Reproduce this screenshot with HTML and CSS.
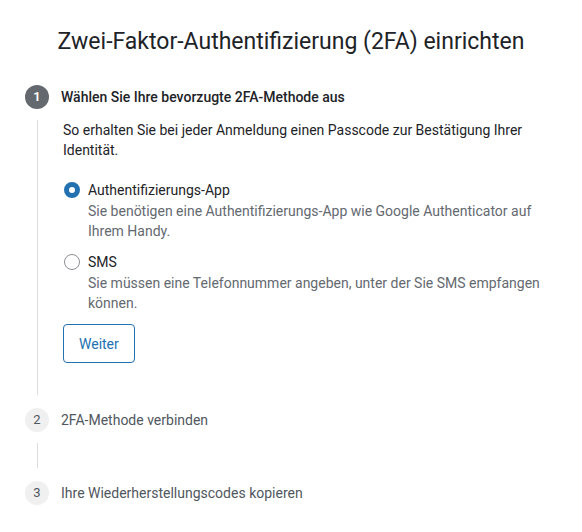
FILE: index.html
```html
<!DOCTYPE html>
<html lang="de">
<head>
  <meta charset="UTF-8">
  <title>Zwei-Faktor-Authentifizierung einrichten</title>
  <link rel="stylesheet" href="styles.css">
</head>
<body>
<div class="wrap">
  <h1 class="title">Zwei-Faktor-Authentifizierung (2FA) einrichten</h1>

  <div class="steps">
    <div class="step active">
      <div class="step-head">
        <span class="num">1</span>
        <span class="step-label">Wählen Sie Ihre bevorzugte 2FA-Methode aus</span>
      </div>
      <div class="step-body">
        <p class="intro">So erhalten Sie bei jeder Anmeldung einen Passcode zur Bestätigung Ihrer Identität.</p>

        <label class="option">
          <input type="radio" name="method" value="app" checked>
          <span class="option-text">
            <span class="option-title">Authentifizierungs-App</span>
            <span class="option-desc">Sie benötigen eine Authentifizierungs-App wie Google Authenticator auf Ihrem Handy.</span>
          </span>
        </label>

        <label class="option">
          <input type="radio" name="method" value="sms">
          <span class="option-text">
            <span class="option-title">SMS</span>
            <span class="option-desc">Sie müssen eine Telefonnummer angeben, unter der Sie SMS empfangen können.</span>
          </span>
        </label>

        <button type="button" class="btn">Weiter</button>
      </div>
    </div>

    <div class="step">
      <div class="step-head">
        <span class="num">2</span>
        <span class="step-label">2FA-Methode verbinden</span>
      </div>
      <div class="step-body"></div>
    </div>

    <div class="step last">
      <div class="step-head">
        <span class="num">3</span>
        <span class="step-label">Ihre Wiederherstellungscodes kopieren</span>
      </div>
    </div>
  </div>
</div>
</body>
</html>
```

FILE: styles.css
```css
body {
  margin: 0;
  background: #fff;
  color: #1d2327;
  font-family: Roboto, "Noto Sans", sans-serif;
  font-size: 14px;
  line-height: 20px;
}
.wrap {
  padding: 24px 25px 0;
}
.title {
  margin: 0 0 25px;
  font-size: 23px;
  line-height: 36px;
  font-weight: 400;
  text-align: center;
  color: #1d2327;
}
.step-head {
  display: flex;
  align-items: center;
  gap: 12px;
  height: 24px;
}
.num {
  width: 24px;
  height: 24px;
  border-radius: 50%;
  background: #f0f0f1;
  color: #50575e;
  font-size: 13px;
  line-height: 24px;
  text-align: center;
  flex-shrink: 0;
}
.step-label {
  color: #50575e;
}
.active .num {
  background: #646970;
  color: #fff;
  font-weight: 600;
}
.active .step-label {
  color: #1d2327;
  font-weight: 500;
}
.step-body {
  margin: 11px 0 13px 12px;
  padding: 0 0 32px 25px;
  border-left: 1px solid #dcdcde;
  min-height: 25px;
  box-sizing: border-box;
}
.step-body:empty {
  padding: 0;
}
.intro {
  margin: 0 0 20px;
}
.option {
  display: flex;
  gap: 8px;
  margin-bottom: 11px;
  cursor: pointer;
}
.option input {
  appearance: none;
  width: 16px;
  height: 16px;
  margin: 2px 0 0 1px;
  border: 1px solid #8c8f94;
  border-radius: 50%;
  flex-shrink: 0;
  box-sizing: border-box;
}
.option input:checked {
  background: #fff;
  border: 5px solid #2271b1;
}
.option-text {
  display: flex;
  flex-direction: column;
}
.option-desc {
  margin-top: 1px;
  color: #646970;
}
.btn {
  margin-top: 0;
  height: 39px;
  padding: 0 15px;
  background: #fff;
  border: 1px solid #2271b1;
  border-radius: 4px;
  color: #2271b1;
  font-family: inherit;
  font-size: 14px;
  cursor: pointer;
}
```
